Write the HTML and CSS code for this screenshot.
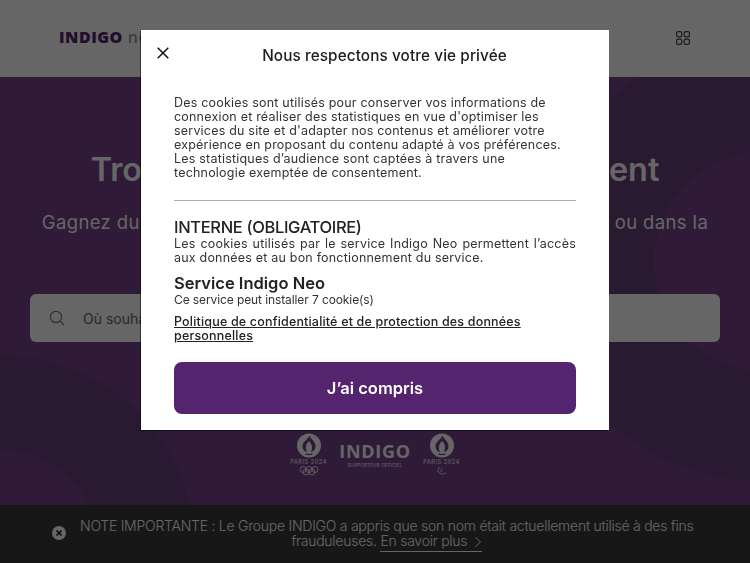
FILE: index.html
```html
<!DOCTYPE html>
<html lang="fr">
<head>
<meta charset="utf-8">
<title>Indigo Neo</title>
<link rel="stylesheet" href="styles.css">
</head>
<body>
<div class="page">
  <header class="topbar">
    <span class="logo"><span class="logo-main">INDIGO</span><span class="logo-neo">neo</span></span>
    <svg class="grid-icon" width="14" height="14" viewBox="0 0 14 14" fill="none" stroke="#444" stroke-width="1.2"><rect x=".6" y=".6" width="5.200" height="5.200" rx="1.600"/><rect x="8.200" y=".6" width="5.200" height="5.200" rx="1.600"/><rect x=".6" y="8.200" width="5.200" height="5.200" rx="1.600"/><rect x="8.200" y="8.200" width="5.200" height="5.200" rx="1.600"/></svg>
  </header>
  <main class="hero">
    <div class="shape shape-a"></div>
    <div class="shape shape-b"></div>
    <div class="shape shape-c"></div>
    <div class="shape shape-d"></div>
    <h1 class="hero-title">Trouvez une place de stationnement</h1>
    <p class="hero-sub">Gagnez du temps en réservant votre place en ligne, à l'avance ou dans la<br>ville de votre choix</p>
    <div class="search">
      <svg width="16" height="16" viewBox="0 0 16 16" fill="none" stroke="#777" stroke-width="1.200"><circle cx="7" cy="7" r="5.600"/><path d="M11.200 11.200l3.800 3.800"/></svg>
      <span>Où souhaitez-vous stationner ?</span>
    </div>
    <div class="partners">
      <div class="emblem">
        <svg width="24" height="25" viewBox="1 .5 24 25"><circle cx="13" cy="13" r="12" fill="#fff"/><path class="flame" d="M13.500 3C15 7 20 9 19.500 14.500 19.200 17.500 17 19 15 19.500 17 15 16 11.500 13 8.500 10 11.500 9 15 11 19.500 9 19 6.800 17.500 6.500 14.500 6 9 12 7 13.500 3Z"/><path class="lip" d="M9.500 21.300c2.300 1 4.700 1 7 0"/></svg>
        <span class="emblem-text">PARIS 2024</span>
        <svg class="mini" width="20" height="10" viewBox="0 0 20 10" fill="none" stroke="#fff" stroke-width=".8"><circle cx="4" cy="3.500" r="3"/><circle cx="10" cy="3.500" r="3"/><circle cx="16" cy="3.500" r="3"/><circle cx="7" cy="6" r="3"/><circle cx="13" cy="6" r="3"/></svg>
      </div>
      <div class="partner-mark">
        <span class="partner-name">INDIGO</span>
        <span class="partner-tag">SUPPORTEUR OFFICIEL</span>
      </div>
      <div class="emblem">
        <svg width="24" height="25" viewBox="1 .5 24 25"><circle cx="13" cy="13" r="12" fill="#fff"/><path class="flame" d="M13.500 3C15 7 20 9 19.500 14.500 19.200 17.500 17 19 15 19.500 17 15 16 11.500 13 8.500 10 11.500 9 15 11 19.500 9 19 6.800 17.500 6.500 14.500 6 9 12 7 13.500 3Z"/><path class="lip" d="M9.500 21.300c2.300 1 4.700 1 7 0"/></svg>
        <span class="emblem-text">PARIS 2024</span>
        <svg class="mini" width="20" height="10" viewBox="0 0 20 10" fill="none" stroke="#fff" stroke-width=".8"><path d="M6 5.500c2 3 5 3 8 1.500M8 1C6 2.500 5.500 4 6.500 6M10.500 2C9 3 8.500 4.500 9.500 6"/></svg>
      </div>
    </div>
  </main>
  <footer class="notice">
    <span class="notice-close"><svg width="8" height="8" viewBox="0 0 8 8" stroke="#171717" stroke-width="1.500"><path d="M1.500 1.500l5 5M6.500 1.500l-5 5"/></svg></span>
    <p class="notice-text">NOTE IMPORTANTE : Le Groupe INDIGO a appris que son nom était actuellement utilisé à des fins<br>frauduleuses. <a class="notice-link">En savoir plus <svg width="8" height="12" viewBox="0 0 8 12" fill="none" stroke="#fff" stroke-width="1"><path d="M1.500 1.500l5 4.500-5 4.500"/></svg></a></p>
  </footer>
</div>
<div class="overlay"></div>
<section class="modal" role="dialog">
  <div class="modal-head">
    <svg class="close" width="12" height="12" viewBox="0 0 12 12" stroke="#111" stroke-width="1.500"><path d="M.7.7l10.600 10.600M11.300.7L.7 11.300"/></svg>
    <h2 class="modal-title">Nous respectons votre vie privée</h2>
  </div>
  <p class="intro">Des cookies sont utilisés pour conserver vos informations de<br>connexion et réaliser des statistiques en vue d'optimiser les<br>services du site et d'adapter nos contenus et améliorer votre<br>expérience en proposant du contenu adapté à vos préférences.<br>Les statistiques d’audience sont captées à travers une<br>technologie exemptée de consentement.</p>
  <hr class="rule">
  <h3 class="section-title">INTERNE (OBLIGATOIRE)</h3>
  <p class="section-text">Les cookies utilisés par le service Indigo Neo permettent l’accès aux données et au bon fonctionnement du service.</p>
  <h4 class="service-title">Service Indigo Neo</h4>
  <p class="service-text">Ce service peut installer 7 cookie(s)</p>
  <a class="policy">Politique de confidentialité et de protection des données personnelles</a>
  <button class="accept">J’ai compris</button>
</section>
</body>
</html>
```
FILE: styles.css
```css
* { box-sizing: border-box; }
html, body { margin: 0; height: 100%; overflow: hidden; }
body { font-family: "Inter", "Noto Sans", sans-serif; background: #fff; }

.page { display: flex; flex-direction: column; height: 563px; }

.topbar {
  height: 77px; flex: none; background: #fff;
  display: flex; align-items: center; justify-content: space-between;
  padding: 0 60px 0 59px;
}
.logo { display: flex; gap: 5px; font-family: "Open Sans", sans-serif; font-weight: 800; font-size: 16px; letter-spacing: .5px; margin-top: -3px; }
.logo-main { color: #54246f; }
.logo-neo { color: #999; font-weight: 600; }
.grid-icon { margin-top: -1px; }

.hero {
  position: relative; flex: 1; overflow: hidden;
  background: #75418c;
  display: flex; flex-direction: column; align-items: center;
  padding: 72px 30px 0;
}
.shape { position: absolute; border-radius: 50%; }
.shape-a { width: 438px; height: 438px; left: 538px; top: -35px; background: #663f7c; }
.shape-b { width: 220px; height: 220px; left: 654px; top: 74px; background: #75418c; }
.shape-c { width: 386px; height: 386px; left: -191px; top: 279px; background: #663f7c; }
.shape-d { width: 202px; height: 202px; left: -101px; top: 373px; background: #75418c; }

.hero-title {
  position: relative; margin: 0; font-size: 32.400px; line-height: 42px; font-weight: 600;
  color: #fff; white-space: nowrap;
}
.hero-sub {
  position: relative; margin: 17px 0 0; font-size: 18.500px; line-height: 28px; color: #fff;
  text-align: center; white-space: nowrap; letter-spacing: .37px;
}
.search {
  position: relative; width: 690px; height: 48px; margin-top: 30px; flex: none;
  background: #fff; border-radius: 6px; padding: 0 19px;
  display: flex; align-items: center; gap: 18px;
  font-size: 14px; color: #666;
}
.partners { position: relative; display: flex; align-items: flex-start; gap: 12px; margin-top: 91px; }
.emblem { display: flex; flex-direction: column; align-items: center; width: 40px; }
.emblem svg { display: block; flex: none; }
.flame { fill: #75418c; }
.lip { fill: none; stroke: #75418c; stroke-width: 1.300; }
.emblem-text { font-size: 5.500px; line-height: 7px; letter-spacing: .6px; white-space: nowrap; margin-top: 1px; color: #fff; }
.mini { margin-top: 0; }
.partner-mark { display: flex; flex-direction: column; align-items: center; color: #fff; margin-top: 7px; width: 69px; }
.partner-name { font-family: "Open Sans", sans-serif; font-size: 18px; line-height: 22px; font-weight: 700; letter-spacing: .7px; }
.partner-tag { font-size: 4.500px; line-height: 6px; letter-spacing: .2px; margin-top: 1px; white-space: nowrap; }

.notice {
  height: 58px; flex: none; background: #3a3a3a;
  display: flex; align-items: flex-start; padding: 13px 57px 0 52px;
  gap: 14px;
}
.notice-close {
  flex: none; width: 14px; height: 14px; margin-top: 8px; border-radius: 50%; background: #fff;
  display: flex; align-items: center; justify-content: center;
}
.notice-close svg { display: block; }
.notice-text {
  margin: 0; font-size: 14px; line-height: 15px; font-weight: 300; color: #fff; text-align: center; letter-spacing: -.25px; flex: 1; white-space: nowrap;
}
.notice-link { border-bottom: 1px solid #fff; padding-bottom: 2px; white-space: nowrap; }
.notice-link svg { vertical-align: -2px; margin-left: 3px; }

.overlay { position: fixed; inset: 0; background: rgba(0,0,0,.6); }

.modal {
  position: fixed; left: 141px; top: 30px; width: 468px; height: 400px;
  background: #fff; padding: 0 33px; color: #222;
  display: flex; flex-direction: column;
  box-shadow: -1px 1px 0 rgba(0,0,0,.5);
}
.modal-head { position: relative; height: 50px; display: flex; align-items: center; justify-content: center; flex: none; padding-left: 19px; }
.close { position: absolute; left: -17px; top: 17px; }
.modal-title { margin: 0; font-size: 15.300px; line-height: 20px; font-weight: 500; color: #1d1d1d; padding-top: 1px; letter-spacing: .1px; }
.intro { margin: 16px 0 0; font-size: 12.500px; line-height: 14px; color: #333; letter-spacing: .2px; white-space: nowrap; }
.rule { margin: 20px 0 0; border: 0; border-top: 1px solid #aaa; height: 1px; flex: none; }
.section-title { margin: 17px 0 0; font-size: 16.500px; line-height: 19px; font-weight: 500; color: #222; letter-spacing: -.35px; }
.section-text { margin: 0; font-size: 12.500px; line-height: 14px; color: #333; text-align: justify; letter-spacing: .2px; }
.service-title { margin: 8px 0 0; font-size: 16.500px; line-height: 20px; font-weight: 600; color: #222; }
.service-text { margin: 0; font-size: 12px; line-height: 14px; color: #333; letter-spacing: -.1px; }
.policy { margin-top: 8px; font-size: 12.500px; line-height: 14px; font-weight: 500; color: #222; text-decoration: underline; letter-spacing: .18px; }
.accept {
  margin-top: 19px; height: 52px; flex: none; border: 0; border-radius: 8px; background: #54246f;
  color: #fff; font: 600 16.500px "Inter", sans-serif;
}
```
